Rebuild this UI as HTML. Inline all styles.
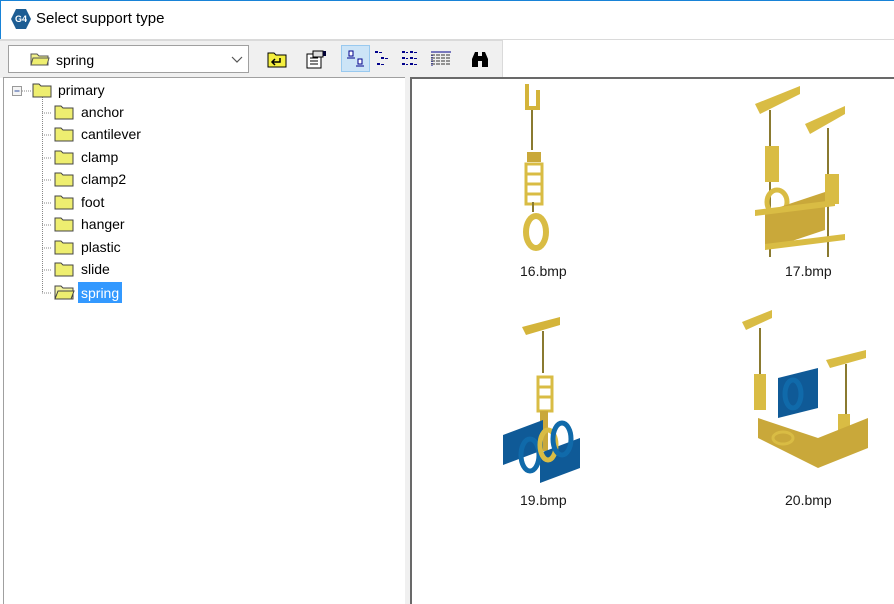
<!DOCTYPE html>
<html><head><meta charset="utf-8"><style>
*{margin:0;padding:0;box-sizing:border-box}
body{width:894px;height:604px;overflow:hidden;background:#fff;font-family:"Segoe UI","Liberation Sans",sans-serif;font-size:14px;color:#000;position:relative}
.abs{position:absolute}
.title{left:0;top:0;width:894px;height:40px;background:#fff;border-top:1px solid #1883d7;border-left:1px solid #1883d7}
.tb{left:0;top:40px;width:503px;height:38px;background:#f0f0f0;border-top:1px solid #dadada;border-right:1px solid #dadada}
.tline{left:0;top:39px;width:894px;height:1px;background:#dadada}
.combo{left:8px;top:45px;width:241px;height:28px;background:#fff;border:1px solid #a0a0a0}
.left{left:3px;top:77px;width:403px;height:527px;background:#fff;border-top:1px solid #a0a0a0;border-left:1px solid #a0a0a0}
.split{left:405px;top:77px;width:5px;height:527px;background:#f0f0f0}
.right{left:410px;top:77px;width:484px;height:527px;background:#fff;border-top:2px solid #696969;border-left:2px solid #696969}
.lbl{position:absolute;font-size:14px;color:#1a1a1a}
</style></head><body>
<div class="abs title"></div>
<div class="abs" style="left:11px;top:9px;width:20px;height:20px;background:#1d5d93;clip-path:polygon(25% 0,75% 0,100% 50%,75% 100%,25% 100%,0 50%);color:#fff;font-size:9px;font-weight:bold;line-height:20px;text-align:center">G4</div>
<div class="abs" style="left:36px;top:10px;font-size:15px;color:#000">Select support type</div>
<div class="abs tline"></div>
<div class="abs tb"></div>
<div class="abs combo"></div>
<svg class="abs" style="left:30px;top:51px" width="20" height="15"><path d="M1 3h6l2 2h9v9H1z" fill="#f2f28a" stroke="#555"/><path d="M3 7h16l-2 7H1z" fill="#eeee70" stroke="#555"/></svg>
<div class="abs" style="left:56px;top:52px;font-size:14px">spring</div>
<svg class="abs" style="left:231px;top:56px" width="12" height="8"><path d="M1 1l5 5 5-5" fill="none" stroke="#555" stroke-width="1.2"/></svg>
<svg class="abs" style="left:267px;top:50px" width="20" height="18"><path d="M1 3h6l2 2h10v12H1z" fill="#f4ef40" stroke="#000"/><path d="M8 9l-3 3 3 3M5 12h8V8" fill="none" stroke="#000" stroke-width="1.5"/></svg>
<svg class="abs" style="left:305px;top:49px" width="22" height="20"><rect x="2" y="5" width="14" height="14" fill="#fff" stroke="#000"/><path d="M5 9h8M5 12h8M5 15h8" stroke="#000"/><rect x="8" y="2" width="10" height="6" fill="#ddd" stroke="#000"/><rect x="18" y="2" width="3" height="5" fill="#003"/></svg>
<div class="abs" style="left:341px;top:45px;width:29px;height:27px;background:#cce4f7;border:1px solid #99c9ef"></div>
<svg class="abs" style="left:346px;top:50px" width="20" height="18"><rect x="3" y="1" width="4" height="5" fill="#fff" stroke="#00008b"/><path d="M1 8h8" stroke="#00008b"/><rect x="12" y="9" width="4" height="5" fill="#fff" stroke="#00008b"/><path d="M10 16h8" stroke="#00008b"/></svg>
<svg class="abs" style="left:374px;top:50px" width="20" height="18" fill="#00008b"><rect x="1" y="1" width="3" height="2"/><rect x="5" y="2" width="3" height="1"/><rect x="7" y="7" width="3" height="2"/><rect x="11" y="8" width="3" height="1"/><rect x="3" y="13" width="3" height="2"/><rect x="7" y="14" width="3" height="1"/></svg>
<svg class="abs" style="left:401px;top:50px" width="22" height="18" fill="#00008b"><rect x="1" y="1" width="3" height="2"/><rect x="5" y="2" width="2" height="1"/><rect x="9" y="1" width="3" height="2"/><rect x="13" y="2" width="3" height="1"/><rect x="1" y="7" width="3" height="2"/><rect x="5" y="8" width="2" height="1"/><rect x="9" y="7" width="3" height="2"/><rect x="13" y="8" width="3" height="1"/><rect x="1" y="13" width="3" height="2"/><rect x="5" y="14" width="2" height="1"/><rect x="9" y="13" width="3" height="2"/><rect x="13" y="14" width="3" height="1"/></svg>
<svg class="abs" style="left:430px;top:50px" width="22" height="18"><path d="M1 2h20" stroke="#00008b"/><path d="M1 5h20M1 8h20M1 11h20M1 14h20" stroke="#333" stroke-dasharray="4 1"/><path d="M2 5v11" stroke="#00008b" stroke-dasharray="1 1"/></svg>
<svg class="abs" style="left:470px;top:50px" width="20" height="18"><path d="M2 17V9l3-7h3v15zM18 17V9l-3-7h-3v15z" fill="#000"/><rect x="8" y="6" width="4" height="5" fill="#000"/></svg>

<div class="abs left"></div>
<div class="abs split"></div>
<div class="abs right"></div>

<svg class="abs" style="left:0;top:80px" width="140" height="225">
<rect x="12.5" y="6.5" width="9" height="9" fill="#f4f4f4" stroke="#999"/><path d="M14.5 11h5" stroke="#3050a0"/>
<path d="M22 11h10" stroke="#888" stroke-dasharray="1 1"/>
<path d="M42.5 17v196M42 33h10M42 55h10M42 78h10M42 100h10M42 123h10M42 145h10M42 168h10M42 190h10M42 213h10" stroke="#888" stroke-dasharray="1 1" fill="none"/>
<path d="M33 4h6l2 2h10v11H33z" fill="#eeee70" stroke="#444"/>
<g fill="#eeee70" stroke="#444">
<path d="M55 26h6l2 2h10v11H55z"/><path d="M55 48h6l2 2h10v11H55z"/><path d="M55 71h6l2 2h10v11H55z"/><path d="M55 93h6l2 2h10v11H55z"/><path d="M55 116h6l2 2h10v11H55z"/><path d="M55 138h6l2 2h10v11H55z"/><path d="M55 161h6l2 2h10v11H55z"/><path d="M55 183h6l2 2h10v11H55z"/>
<path d="M55 206h6l2 2h10v11H55z" fill="#f2f2a0"/><path d="M58 211h16l-3 8H55z"/>
</g>
</svg>
<div class="abs" style="left:58px;top:82px">primary</div>
<div class="abs" style="left:81px;top:104px">anchor</div>
<div class="abs" style="left:81px;top:126px">cantilever</div>
<div class="abs" style="left:81px;top:149px">clamp</div>
<div class="abs" style="left:81px;top:171px">clamp2</div>
<div class="abs" style="left:81px;top:194px">foot</div>
<div class="abs" style="left:81px;top:216px">hanger</div>
<div class="abs" style="left:81px;top:239px">plastic</div>
<div class="abs" style="left:81px;top:261px">slide</div>
<div class="abs" style="left:78px;top:282px;background:#3399ff;color:#fff;padding:0 3px;height:21px;line-height:22px">spring</div>

<svg class="abs" style="left:500px;top:82px" width="80" height="170">
<path d="M25 2h4v24h-4zM36 8h4v18h-4zM25 24h15v4H25z" fill="#d4b43a"/>
<path d="M32 28v40" stroke="#8a7a30" stroke-width="2"/>
<rect x="27" y="70" width="14" height="10" fill="#c9a83a"/>
<g fill="none" stroke="#d9bc44" stroke-width="3"><rect x="26" y="82" width="16" height="40"/><path d="M26 92h16M26 102h16M26 112h16"/></g>
<path d="M33 120v10" stroke="#8a7a30" stroke-width="2"/>
<ellipse cx="36" cy="150" rx="10" ry="16" fill="none" stroke="#d9bc44" stroke-width="6"/>
</svg>
<div class="lbl abs" style="left:520px;top:263px">16.bmp</div>

<svg class="abs" style="left:745px;top:82px" width="130" height="175" fill="#d9bc44">
<path d="M10 22l45-18v8L15 32z"/><path d="M60 42l40-18v8L65 52z"/>
<path d="M25 28v150M83 46v130" stroke="#8a7a30" stroke-width="2"/>
<rect x="20" y="64" width="14" height="36"/><rect x="80" y="92" width="14" height="30"/>
<ellipse cx="32" cy="120" rx="10" ry="12" fill="none" stroke="#d9bc44" stroke-width="5"/>
<path d="M20 130l60-20v38l-60 20z" fill="#c9a83a"/>
<path d="M10 128l80-10v6l-80 10zM20 162l80-10v6l-80 10z"/>
</svg>
<div class="lbl abs" style="left:785px;top:263px">17.bmp</div>

<svg class="abs" style="left:500px;top:305px" width="90" height="180">
<path d="M22 22l38-10v8L26 30z" fill="#d4b43a"/>
<path d="M43 26v42" stroke="#8a7a30" stroke-width="2"/>
<g fill="none" stroke="#d9bc44" stroke-width="3"><rect x="38" y="72" width="14" height="34"/><path d="M38 82h14M38 92h14"/></g>
<path d="M44 106v40" stroke="#c9a83a" stroke-width="8"/>
<path d="M3 130l40-15v30L3 160zM40 148l40-15v30l-40 15z" fill="#0f5a97"/>
<ellipse cx="30" cy="150" rx="9" ry="16" fill="none" stroke="#106aaa" stroke-width="5"/>
<ellipse cx="48" cy="140" rx="8" ry="15" fill="none" stroke="#d9bc44" stroke-width="5"/>
<ellipse cx="62" cy="134" rx="9" ry="16" fill="none" stroke="#106aaa" stroke-width="5"/>
</svg>
<div class="lbl abs" style="left:520px;top:492px">19.bmp</div>

<svg class="abs" style="left:738px;top:308px" width="140" height="180" fill="#d9bc44">
<path d="M4 14l30-12v8L8 22z"/><path d="M88 52l40-10v8L92 60z"/>
<path d="M22 20v70M108 56v50" stroke="#8a7a30" stroke-width="2"/>
<rect x="16" y="66" width="12" height="36"/><rect x="100" y="106" width="12" height="30"/>
<path d="M40 70l40-10v40l-40 10z" fill="#0f5a97"/>
<ellipse cx="55" cy="86" rx="8" ry="14" fill="none" stroke="#106aaa" stroke-width="5"/>
<path d="M20 110l60 20 50-20v30l-50 20-60-30z" fill="#c9a83a"/>
<ellipse cx="45" cy="130" rx="10" ry="6" fill="none" stroke="#d9bc44" stroke-width="3"/>
</svg>
<div class="lbl abs" style="left:785px;top:492px">20.bmp</div>
</body></html>
